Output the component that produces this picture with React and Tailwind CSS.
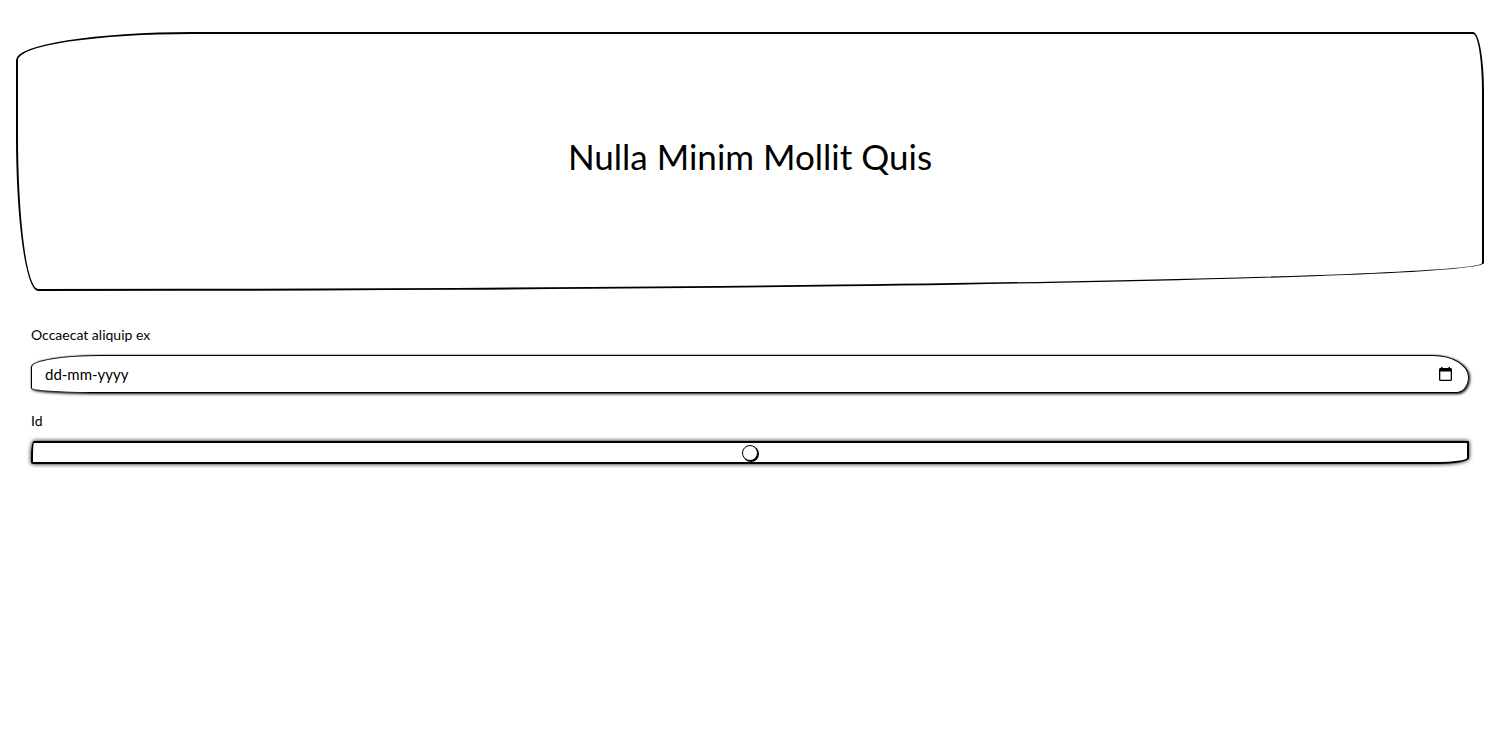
import { useState } from "react";

function CalendarIcon() {
  return (
    <svg viewBox="0 0 13 14" className="block h-[14px] w-[13px]" aria-hidden="true">
      <path
        d="M2 0h1.500v1h6V0H11v1h1l1 1v11l-1 1H1l-1-1V2l1-1h1zM1.300 4.500v8.300h10.400V4.500z"
        fill="black"
        fillRule="evenodd"
      />
    </svg>
  );
}

export default function App() {
  const [date, setDate] = useState("");
  const [level, setLevel] = useState(50);

  return (
    <main className="px-4 py-8 font-['Lato',sans-serif] text-black">
      <header className="flex h-[259px] items-center justify-center rounded-[12%_11px_98.5%_22px/28px_60px_28px_60%] border-2 border-black pb-3">
        <h1 className="text-[35px] leading-10">Nulla Minim Mollit Quis</h1>
      </header>

      <form className="flex flex-col px-[15px] pt-8">
        <label htmlFor="date" className="text-sm leading-6">
          Occaecat aliquip ex
        </label>
        <div className="mt-2 flex h-[38px] items-center rounded-[70px_36px_12px_60px/12px_22px_16px_5px] border border-black pr-4 pl-[13px] shadow-[1px_1px_3px_black,0_0_1px_black]">
          <input
            id="date"
            type="text"
            placeholder="dd-mm-yyyy"
            value={date}
            onChange={(e) => setDate(e.target.value)}
            className="min-w-0 flex-1 bg-transparent text-[15px] leading-6 outline-none placeholder:text-black"
          />
          <button type="button" aria-label="Open calendar">
            <CalendarIcon />
          </button>
        </div>

        <label htmlFor="level" className="mt-4 text-sm leading-6">
          Id
        </label>
        <input
          id="level"
          type="range"
          min="0"
          max="100"
          value={level}
          onChange={(e) => setLevel(Number(e.target.value))}
          className="mt-2 h-[23px] w-full appearance-none rounded-[3px_1px_32px_2px/16px_1px_6px_2px] border-2 border-black bg-white shadow-[0_0_4px_black] outline-none [&::-webkit-slider-thumb]:size-4 [&::-webkit-slider-thumb]:appearance-none [&::-webkit-slider-thumb]:rounded-full [&::-webkit-slider-thumb]:border [&::-webkit-slider-thumb]:border-solid [&::-webkit-slider-thumb]:border-black [&::-webkit-slider-thumb]:bg-white [&::-webkit-slider-thumb]:shadow-[1px_1px_0_black]"
        />
      </form>
    </main>
  );
}
